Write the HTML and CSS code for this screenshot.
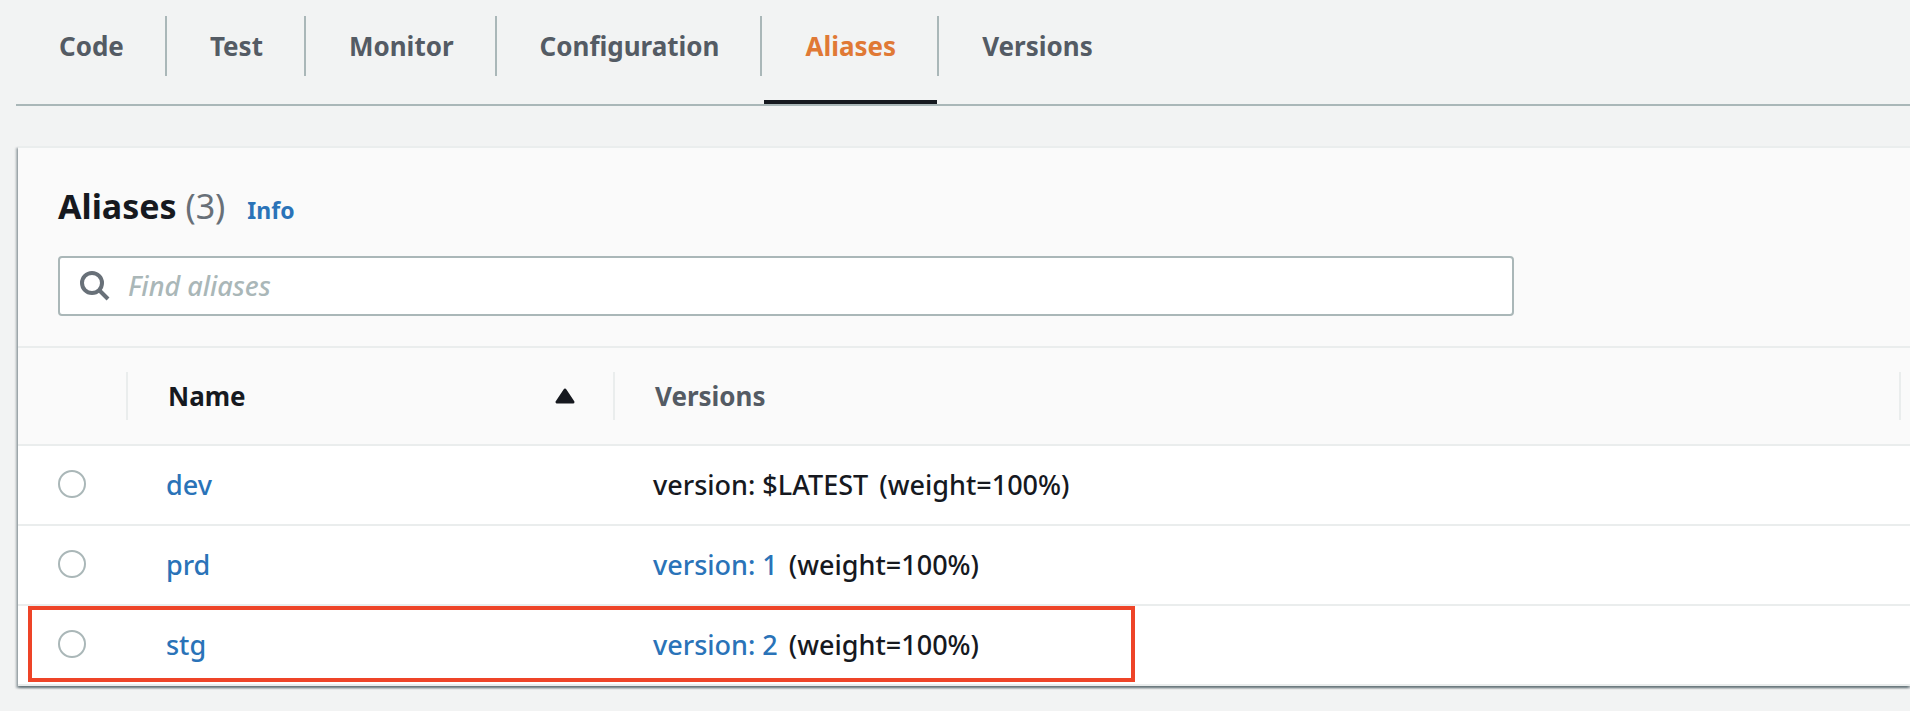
FILE: index.html
```html
<!DOCTYPE html>
<html lang="en">
<head>
<meta charset="utf-8">
<title>Aliases</title>
<link rel="stylesheet" href="styles.css">
</head>
<body>
<main class="page">
  <nav class="tabs" aria-label="Function sections">
    <a class="tab" href="#code"><span class="tab-label">Code</span></a>
    <a class="tab" href="#test"><span class="tab-label">Test</span></a>
    <a class="tab" href="#monitor"><span class="tab-label">Monitor</span></a>
    <a class="tab" href="#configuration"><span class="tab-label">Configuration</span></a>
    <a class="tab tab-active" href="#aliases" aria-current="page"><span class="tab-label">Aliases</span></a>
    <a class="tab" href="#versions"><span class="tab-label">Versions</span></a>
  </nav>

  <section class="panel">
    <header class="panel-header">
      <div class="title-row">
        <h2 class="title">Aliases <span class="count">(3)</span></h2>
        <a class="info" href="#info">Info</a>
      </div>
      <label class="search">
        <svg class="search-icon" viewBox="0 0 30 30" aria-hidden="true"><circle cx="12" cy="12" r="10"/><path d="M19 19l9 9"/></svg>
        <input class="search-input" type="search" placeholder="Find aliases" aria-label="Find aliases">
      </label>
    </header>

    <table class="table">
      <colgroup><col class="col-select"><col class="col-name"><col class="col-versions"><col></colgroup>
      <thead>
        <tr>
          <th aria-label="Select"><div class="head"></div></th>
          <th class="sorted" aria-sort="ascending"><div class="head">Name
            <svg class="sort-icon" viewBox="0 0 20 16" aria-hidden="true"><path d="M10 2L2 14h16z"/></svg></div></th>
          <th><div class="head">Versions</div></th>
          <th aria-label="Description"></th>
        </tr>
      </thead>
      <tbody>
        <tr>
          <td><input class="radio" type="radio" name="alias" aria-label="dev"></td>
          <td><a href="#dev">dev</a></td>
          <td>version: $LATEST <span class="weight">(weight=100%)</span></td>
          <td></td>
        </tr>
        <tr>
          <td><input class="radio" type="radio" name="alias" aria-label="prd"></td>
          <td><a href="#prd">prd</a></td>
          <td><a href="#version-1">version: 1</a> <span class="weight">(weight=100%)</span></td>
          <td></td>
        </tr>
        <tr>
          <td><input class="radio" type="radio" name="alias" aria-label="stg"></td>
          <td><a href="#stg">stg</a></td>
          <td><a href="#version-2">version: 2</a> <span class="weight">(weight=100%)</span></td>
          <td></td>
        </tr>
      </tbody>
    </table>
    <div class="highlight" aria-hidden="true"></div>
  </section>
</main>
</body>
</html>
```
FILE: styles.css
```css
* {
  box-sizing: border-box;
}

body {
  margin: 0;
  background: #f2f3f3;
  color: #16191f;
  font-family: "Noto Sans", "Open Sans", sans-serif;
  font-size: 26px;
  line-height: 36px;
}

a {
  color: #2a73b8;
  text-decoration: none;
}

.page {
  padding: 16px 0 24px 16px;
}

.tabs {
  display: flex;
  border-bottom: 2px solid #aab7b8;
}

.tab {
  position: relative;
  padding-bottom: 28px;
  color: #545b64;
  font-weight: 700;
}

.tab-label {
  display: block;
  padding: 12px 41px 12px 43px;
  border-right: 2px solid #aab7b8;
}

.tab:last-child .tab-label {
  border-right: 0;
}

.tab-active {
  color: #e07935;
}

.tab-active::after {
  content: "";
  position: absolute;
  right: 2px;
  bottom: 0;
  left: 2px;
  height: 4px;
  background: #16191f;
}

.panel {
  position: relative;
  margin: 40px 0 0 2px;
  border-top: 2px solid #eaeded;
  background: #fff;
  box-shadow: 0 2px 2px rgba(0, 28, 36, 0.3), 2px 2px 2px rgba(0, 28, 36, 0.15), -2px 2px 2px rgba(0, 28, 36, 0.3);
}

.panel-header {
  padding: 34px 40px 30px;
  border-bottom: 2px solid #eaeded;
  background: #fafafa;
}

.title-row {
  display: flex;
  align-items: baseline;
  gap: 22px;
  margin-bottom: 26px;
}

.title {
  margin: 0;
  font-size: 34px;
  line-height: 48px;
}

.count {
  color: #687078;
  font-weight: 400;
}

.info {
  font-size: 23px;
  font-weight: 700;
}

.search {
  display: flex;
  align-items: center;
  gap: 18px;
  max-width: 1456px;
  height: 60px;
  padding: 0 20px;
  border: 2px solid #aab7b8;
  border-radius: 4px;
  background: #fff;
}

.search-icon {
  flex: none;
  width: 30px;
  height: 30px;
  fill: none;
  stroke: #687078;
  stroke-width: 4;
}

.search-input {
  flex: 1;
  min-width: 0;
  padding: 0;
  border: 0;
  outline: 0;
  background: none;
  color: inherit;
  font: inherit;
  font-size: 27px;
}

.search-input::placeholder {
  color: #aab7b8;
  font-style: italic;
  font-weight: 500;
  opacity: 1;
}

.table {
  width: 100%;
  border-collapse: separate;
  border-spacing: 0;
  table-layout: fixed;
}

.col-select {
  width: 110px;
}

.col-name {
  width: 487px;
}

.col-versions {
  width: 1286px;
}

th {
  padding: 24px 0;
  border-bottom: 2px solid #eaeded;
  background: #fafafa;
  color: #545b64;
  text-align: left;
}

.sorted {
  color: #16191f;
}

.head {
  display: flex;
  align-items: center;
  justify-content: space-between;
  height: 48px;
  padding: 0 38px 0 40px;
  border-right: 2px solid #eaeded;
}

.sort-icon {
  width: 20px;
  height: 16px;
  fill: currentColor;
  stroke: currentColor;
  stroke-width: 3;
  stroke-linejoin: round;
}

td {
  height: 80px;
  padding: 0 0 0 38px;
  border-bottom: 2px solid #eaeded;
  font-size: 27px;
  font-weight: 500;
  vertical-align: middle;
}

td:first-child {
  padding: 0 0 2px 40px;
}

.weight {
  margin-left: 4px;
}

.radio {
  display: block;
  width: 28px;
  height: 28px;
  margin: 0;
  border: 2px solid #aab7b8;
  border-radius: 50%;
  appearance: none;
  background: #fff;
}

.radio:checked {
  border: 8px solid #2a73b8;
}

/* Marker frame drawn over the last row */
.highlight {
  position: absolute;
  bottom: 4px;
  left: 10px;
  width: 1107px;
  height: 76px;
  border: 4px solid #ee4428;
  pointer-events: none;
}
```
